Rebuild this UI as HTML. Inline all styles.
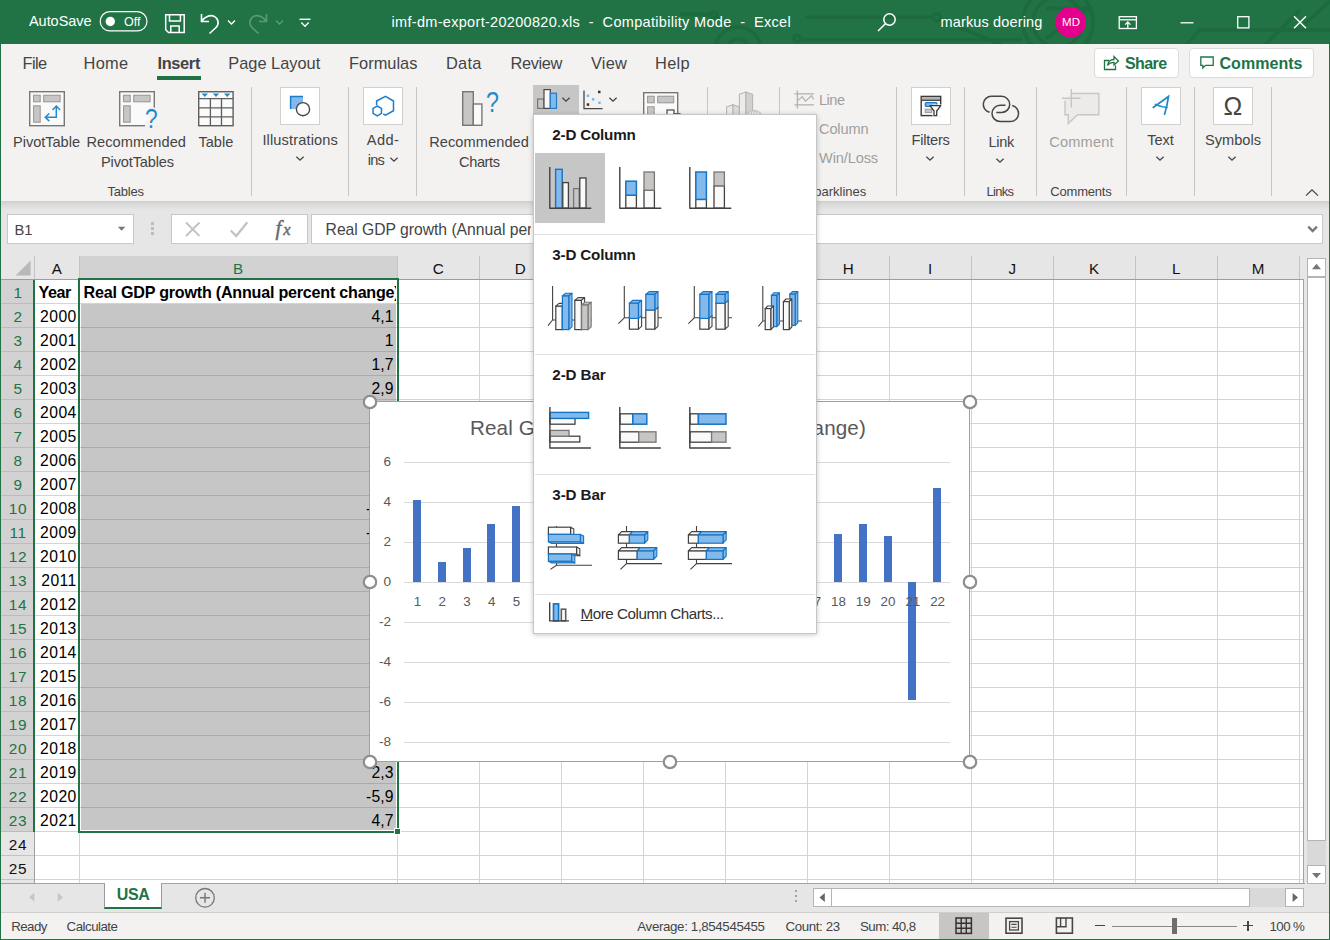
<!DOCTYPE html>
<html lang="en"><head><meta charset="utf-8"><title>Excel</title><style>html,body{margin:0;padding:0}
body{width:1330px;height:940px;overflow:hidden;background:#217346;position:relative;font-family:"Liberation Sans",sans-serif;}
#w{position:absolute;left:0;top:0;width:1330px;height:940px;overflow:hidden;}
#w div,#w svg,#w span.t{position:absolute;}
span.t{white-space:nowrap;}
svg{overflow:visible}
</style></head><body><div id="w">
<div style="left:0px;top:0px;width:1330px;height:44px;background:#217346;"></div>
<svg style="left:680px;top:0px;overflow:hidden;" width="650" height="44" viewBox="680 0 650 44"><g fill="none" stroke="#1d6a3e" stroke-width="3.6">
<path d="M680 14.4 H712 M716 16.5 L732 28"/><circle cx="714" cy="14.8" r="3"/>
<circle cx="738" cy="50" r="23"/><circle cx="738" cy="50" r="11"/>
<circle cx="797" cy="38.6" r="3.2"/><path d="M800.5 39.7 H1022"/>
<path d="M805 17.3 H932"/><circle cx="936.6" cy="17.3" r="3.6"/><path d="M940 19.5 L1002 45"/>
<circle cx="1058" cy="22" r="35"/><circle cx="1058" cy="22" r="25"/>
<path d="M1046 8.4 H1089 L1046 38.5" />
<path d="M1185 46 L1200 30 H1330"/><path d="M1264 46 L1300 10 M1305 24 L1330 1"/>
</g></svg>
<span class="t" style="left:29.00px;top:12.30px;font-size:14.5px;line-height:19px;color:#fff;letter-spacing:-0.048px;">AutoSave</span>
<svg style="left:99px;top:10px;" width="50" height="23" viewBox="0 0 50 23"><rect x="1.2" y="1.7" width="46.8" height="19.2" rx="9.6" fill="none" stroke="#fff" stroke-width="1.2"/><circle cx="11.3" cy="11.5" r="4.7" fill="#fff"/></svg>
<span class="t" style="left:124.00px;top:13.60px;font-size:12.5px;line-height:16px;color:#fff;letter-spacing:0.019px;">Off</span>
<svg style="left:163px;top:12px;" width="24" height="23" viewBox="0 0 24 23"><g fill="none" stroke="#fff" stroke-width="1.5"><path d="M2.7 2.7 H21.2 V20.5 H5.5 L2.7 17.7 Z"/><path d="M6.5 2.7 V9 H17.4 V2.7"/><path d="M7.8 20.5 V14 H16.2 V20.5"/></g></svg>
<svg style="left:197px;top:10px;" width="26" height="26" viewBox="0 0 26 26"><g fill="none" stroke="#fff" stroke-width="1.6"><path d="M4.5 4 V11.5 H12"/><path d="M4.8 11.2 C8 6.5 13.5 4.3 17.6 6.6 C22 9.2 22.3 14.5 18.5 18 L12.5 23.5"/></g></svg>
<svg style="left:226px;top:18px;" width="12" height="9" viewBox="0 0 12 9"><path d="M2 2.5 L5.5 6 L9 2.5" fill="none" stroke="#fff" stroke-width="1.4"/></svg>
<svg style="left:245px;top:10px;" width="26" height="26" viewBox="0 0 26 26"><g fill="none" stroke="#5c9a79" stroke-width="1.6" transform="translate(26,0) scale(-1,1)"><path d="M4.5 4 V11.5 H12"/><path d="M4.8 11.2 C8 6.5 13.5 4.3 17.6 6.6 C22 9.2 22.3 14.5 18.5 18 L12.5 23.5"/></g></svg>
<svg style="left:274px;top:18px;" width="12" height="9" viewBox="0 0 12 9"><path d="M2 2.5 L5.5 6 L9 2.5" fill="none" stroke="#5c9a79" stroke-width="1.4"/></svg>
<svg style="left:297px;top:15px;" width="16" height="14" viewBox="0 0 16 14"><path d="M2.5 4.3 H13.5" stroke="#fff" stroke-width="1.4"/><path d="M4.3 7.6 L8 11.2 L11.7 7.6" fill="none" stroke="#fff" stroke-width="1.4"/></svg>
<span class="t" style="left:391.50px;top:13.00px;font-size:14.5px;line-height:19px;color:#fff;letter-spacing:0.311px;white-space:pre;">imf-dm-export-20200820.xls  -  Compatibility Mode  -  Excel</span>
<svg style="left:874px;top:10px;" width="26" height="24" viewBox="0 0 26 24"><g fill="none" stroke="#fff" stroke-width="1.5"><circle cx="15.5" cy="9.5" r="5.7"/><path d="M11.5 13.6 L4 21"/></g></svg>
<span class="t" style="left:940.50px;top:13.10px;font-size:14.5px;line-height:19px;color:#fff;letter-spacing:0.147px;">markus doering</span>
<svg style="left:1055px;top:6px;" width="32" height="32" viewBox="0 0 32 32"><circle cx="15.7" cy="16.3" r="15.3" fill="#e3008c"/></svg>
<span class="t" style="left:1062.00px;top:14.90px;font-size:11.5px;line-height:15px;color:#fff;letter-spacing:0.057px;">MD</span>
<svg style="left:1116px;top:14px;" width="24" height="18" viewBox="0 0 24 18"><g fill="none" stroke="#fff" stroke-width="1.3"><rect x="3.2" y="2.7" width="17.2" height="11.8"/><path d="M3.2 5.8 H20.4"/><path d="M11.8 14 V8.2 M9.2 10.6 L11.8 8 L14.4 10.6"/></g></svg>
<svg style="left:1176px;top:14px;" width="22" height="18" viewBox="0 0 22 18"><path d="M4.5 8.8 H17.5" stroke="#fff" stroke-width="1.3"/></svg>
<svg style="left:1232px;top:12px;" width="22" height="22" viewBox="0 0 22 22"><rect x="5.7" y="4.7" width="11.2" height="11.2" fill="none" stroke="#fff" stroke-width="1.3"/></svg>
<svg style="left:1289px;top:12px;" width="22" height="22" viewBox="0 0 22 22"><path d="M5 4.3 L17 16.3 M17 4.3 L5 16.3" stroke="#fff" stroke-width="1.4"/></svg>
<div style="left:1px;top:44px;width:1328px;height:157px;background:#f3f2f1;"></div>
<span class="t" style="left:22.50px;top:52.90px;font-size:16.4px;line-height:21px;color:#444;letter-spacing:-0.607px;">File</span>
<span class="t" style="left:83.60px;top:52.90px;font-size:16.4px;line-height:21px;color:#444;letter-spacing:0.238px;">Home</span>
<span class="t" style="left:157.50px;top:52.90px;font-size:16.4px;line-height:21px;color:#444;font-weight:700;letter-spacing:-0.360px;">Insert</span>
<span class="t" style="left:228.30px;top:52.90px;font-size:16.4px;line-height:21px;color:#444;letter-spacing:-0.009px;">Page Layout</span>
<span class="t" style="left:349.00px;top:52.90px;font-size:16.4px;line-height:21px;color:#444;letter-spacing:0.019px;">Formulas</span>
<span class="t" style="left:446.00px;top:52.90px;font-size:16.4px;line-height:21px;color:#444;letter-spacing:0.214px;">Data</span>
<span class="t" style="left:510.50px;top:52.90px;font-size:16.4px;line-height:21px;color:#444;letter-spacing:-0.379px;">Review</span>
<span class="t" style="left:591.00px;top:52.90px;font-size:16.4px;line-height:21px;color:#444;letter-spacing:0.187px;">View</span>
<span class="t" style="left:655.00px;top:52.90px;font-size:16.4px;line-height:21px;color:#444;letter-spacing:0.317px;">Help</span>
<div style="left:157px;top:76px;width:44px;height:4px;background:#217346;"></div>
<div style="left:1094px;top:48px;width:85px;height:30px;background:#fff;border:1px solid #dddbd9;border-radius:4px;box-sizing:border-box;"></div>
<div style="left:1189px;top:48px;width:125px;height:30px;background:#fff;border:1px solid #dddbd9;border-radius:4px;box-sizing:border-box;"></div>
<svg style="left:1101px;top:53px;" width="20" height="20" viewBox="0 0 20 20"><g fill="none" stroke="#217346" stroke-width="1.3"><path d="M8 7.5 H3.5 V16.5 H14.5 V12.5"/><path d="M6.5 12.5 C7 8.5 9.5 6.5 13 6.5 V3.5 L17.5 8 L13 12 V9.3 C10 9.3 8 10.3 6.5 12.5 Z"/></g></svg>
<span class="t" style="left:1125.00px;top:52.80px;font-size:16px;line-height:21px;color:#217346;font-weight:700;letter-spacing:-0.594px;">Share</span>
<svg style="left:1198px;top:54px;" width="20" height="18" viewBox="0 0 20 18"><path d="M2.8 3 H15.2 V11.3 H7.6 L4.8 14 V11.3 H2.8 Z" fill="none" stroke="#217346" stroke-width="1.3"/></svg>
<span class="t" style="left:1219.50px;top:52.80px;font-size:16px;line-height:21px;color:#217346;font-weight:700;letter-spacing:0.040px;">Comments</span>
<div style="left:251.0px;top:87px;width:1px;height:109px;background:#c8c6c4;"></div>
<div style="left:348.0px;top:87px;width:1px;height:109px;background:#c8c6c4;"></div>
<div style="left:416.0px;top:87px;width:1px;height:109px;background:#c8c6c4;"></div>
<div style="left:707px;top:87px;width:1px;height:109px;background:#c8c6c4;"></div>
<div style="left:779px;top:87px;width:1px;height:109px;background:#c8c6c4;"></div>
<div style="left:896px;top:87px;width:1px;height:109px;background:#c8c6c4;"></div>
<div style="left:964.0px;top:87px;width:1px;height:109px;background:#c8c6c4;"></div>
<div style="left:1036.0px;top:87px;width:1px;height:109px;background:#c8c6c4;"></div>
<div style="left:1126.0px;top:87px;width:1px;height:109px;background:#c8c6c4;"></div>
<div style="left:1194.0px;top:87px;width:1px;height:109px;background:#c8c6c4;"></div>
<div style="left:1271.0px;top:87px;width:1px;height:109px;background:#c8c6c4;"></div>
<svg style="left:29px;top:91px;" width="40" height="40" viewBox="0 0 40 40"><rect x="0.7" y="0.7" width="34.6" height="34" fill="#fafafa" stroke="#797775" stroke-width="1.4"/><rect x="4.6" y="4.2" width="6.6" height="6.6" fill="#c8c6c4" stroke="#979593" stroke-width="1"/><rect x="14.7" y="4.2" width="16.4" height="6.6" fill="#c8c6c4" stroke="#979593" stroke-width="1"/><rect x="4.6" y="14.8" width="6.6" height="16.4" fill="#c8c6c4" stroke="#979593" stroke-width="1"/><g fill="none" stroke="#1e8bcd" stroke-width="1.5"><path d="M16.5 26.3 H27.3 V15.5"/><path d="M20.3 22.5 L16.3 26.3 L20.3 30.1"/><path d="M23.5 19 L27.3 15 L31.1 19"/></g></svg>
<span class="t" style="left:13.00px;top:133.00px;font-size:14.6px;line-height:19px;color:#444;letter-spacing:-0.036px;">PivotTable</span>
<svg style="left:119.4px;top:91px;" width="40" height="40" viewBox="0 0 40 40"><rect x="0.7" y="0.7" width="34.6" height="34" fill="#fafafa" stroke="#797775" stroke-width="1.4"/><rect x="4.6" y="4.2" width="6.6" height="6.6" fill="#c8c6c4" stroke="#979593" stroke-width="1"/><rect x="14.7" y="4.2" width="16.4" height="6.6" fill="#c8c6c4" stroke="#979593" stroke-width="1"/><rect x="4.6" y="14.8" width="6.6" height="16.4" fill="#c8c6c4" stroke="#979593" stroke-width="1"/><rect x="30" y="16.6" width="8" height="22" fill="#f3f2f1"/><rect x="26" y="30" width="6" height="8" fill="#f3f2f1"/></svg>
<span class="t" style="left:144.60px;top:99.70px;font-size:28.5px;line-height:37px;color:#1e8bcd;transform:scaleX(0.8);transform-origin:0 50%;">?</span>
<span class="t" style="left:86.50px;top:133.00px;font-size:14.6px;line-height:19px;color:#444;letter-spacing:0.045px;">Recommended</span>
<span class="t" style="left:101.00px;top:152.90px;font-size:14.6px;line-height:19px;color:#444;letter-spacing:-0.151px;">PivotTables</span>
<svg style="left:198.2px;top:91px;" width="40" height="40" viewBox="0 0 40 40"><rect x="0.7" y="0.7" width="34.4" height="34" fill="#fafafa" stroke="#605e5c" stroke-width="1.4"/><path d="M0.7 7.6 H35 M0.7 16.8 H35 M0.7 25.8 H35 M12.4 7.6 V34.7 M23.5 7.6 V34.7" stroke="#605e5c" stroke-width="1.3" fill="none"/><path d="M3.6 2.6 h6.4 l-3.2 3.4z M14.8 2.6 h6.4 l-3.2 3.4z M26 2.6 h6.4 l-3.2 3.4z" fill="#1e8bcd"/></svg>
<span class="t" style="left:198.50px;top:133.00px;font-size:14.6px;line-height:19px;color:#444;letter-spacing:-0.021px;">Table</span>
<span class="t" style="left:107.40px;top:182.80px;font-size:13px;line-height:17px;color:#444;letter-spacing:-0.197px;">Tables</span>
<div style="left:280px;top:87px;width:40px;height:38px;background:#fff;border:1px solid #d2d0ce;box-sizing:border-box;"></div>
<svg style="left:286px;top:92px;" width="30" height="28" viewBox="0 0 30 28"><path d="M4.6 4.4 H17 V17 H4.6 Z" fill="#83b9eb"/><path d="M4.6 17 V4.4 H17" fill="none" stroke="#1e7cc8" stroke-width="1.5"/><circle cx="17" cy="17.2" r="6.6" fill="#fff" stroke="#484644" stroke-width="1.4"/></svg>
<span class="t" style="left:262.40px;top:130.90px;font-size:14.6px;line-height:19px;color:#444;letter-spacing:0.135px;">Illustrations</span>
<svg style="left:293.5px;top:154.0px;" width="12" height="9" viewBox="0 0 12 9"><path d="M2.4 2.7 L6 6.2 L9.6 2.7" fill="none" stroke="#444" stroke-width="1.3"/></svg>
<div style="left:363px;top:87px;width:40px;height:38px;background:#fff;border:1px solid #d2d0ce;box-sizing:border-box;"></div>
<svg style="left:364px;top:92px;" width="38" height="30" viewBox="0 0 38 30"><path d="M12.6 13.2 V9 L21.5 4.3 L29.5 9 V18.7 L21.5 23.2 L19.3 22" fill="none" stroke="#1e7cc8" stroke-width="1.5"/><path d="M13.3 14 L17.5 16.4 V21.4 L13.3 23.8 L9 21.4 V16.4 Z" fill="none" stroke="#1e7cc8" stroke-width="1.5"/></svg>
<span class="t" style="left:366.80px;top:131.40px;font-size:14.6px;line-height:19px;color:#444;letter-spacing:0.440px;">Add-</span>
<span class="t" style="left:367.80px;top:151.00px;font-size:14.6px;line-height:19px;color:#444;letter-spacing:-0.821px;">ins</span>
<svg style="left:387.5px;top:154.5px;" width="12" height="9" viewBox="0 0 12 9"><path d="M2.4 2.7 L6 6.2 L9.6 2.7" fill="none" stroke="#444" stroke-width="1.3"/></svg>
<svg style="left:462px;top:91.3px;" width="24" height="36" viewBox="0 0 24 36"><rect x="0.7" y="0.7" width="10.6" height="33.6" fill="#c8c6c4" stroke="#797775" stroke-width="1.4"/><rect x="11.3" y="13" width="8.6" height="21.3" fill="#fafafa" stroke="#797775" stroke-width="1.4"/></svg>
<span class="t" style="left:486.00px;top:83.10px;font-size:29px;line-height:38px;color:#1e8bcd;transform:scaleX(0.8);transform-origin:0 50%;">?</span>
<span class="t" style="left:429.20px;top:133.10px;font-size:14.6px;line-height:19px;color:#444;letter-spacing:0.072px;">Recommended</span>
<span class="t" style="left:459.00px;top:152.60px;font-size:14.6px;line-height:19px;color:#444;letter-spacing:-0.384px;">Charts</span>
<div style="left:533px;top:85px;width:46px;height:31px;background:#c6c6c6;"></div>
<svg style="left:537px;top:89.3px;" width="22" height="21" viewBox="0 0 22 21"><rect x="0.6" y="10" width="6.4" height="9.4" fill="#c8c6c4" stroke="#797775" stroke-width="1.2"/><rect x="7" y="0.6" width="6.3" height="18.8" fill="#fafafa" stroke="#484644" stroke-width="1.2"/><rect x="13.3" y="4.2" width="6.2" height="15.2" fill="#83b9eb" stroke="#1e7cc8" stroke-width="1.2"/></svg>
<svg style="left:560px;top:94.8px;" width="12" height="9" viewBox="0 0 12 9"><path d="M2.4 2.7 L6 6.2 L9.6 2.7" fill="none" stroke="#444" stroke-width="1.3"/></svg>
<svg style="left:583px;top:89.6px;" width="22" height="21" viewBox="0 0 22 21"><path d="M1 0.5 V18.6 H19.6" fill="none" stroke="#484644" stroke-width="1.3"/><g fill="#7ab8f0"><rect x="3.7" y="4.5" width="2.5" height="2.5"/><rect x="8.9" y="8.1" width="2.5" height="2.5"/><rect x="15.2" y="11.5" width="2.5" height="2.5"/></g><g fill="#333"><rect x="15" y="0.7" width="2.5" height="2.5"/><rect x="3.7" y="13.3" width="2.5" height="2.5"/></g></svg>
<svg style="left:606.5px;top:94.8px;" width="12" height="9" viewBox="0 0 12 9"><path d="M2.4 2.7 L6 6.2 L9.6 2.7" fill="none" stroke="#444" stroke-width="1.3"/></svg>
<svg style="left:643.3px;top:91.5px;" width="40" height="40" viewBox="0 0 40 40"><rect x="0.7" y="0.7" width="34" height="34" fill="#fafafa" stroke="#797775" stroke-width="1.4"/><rect x="4.6" y="4.2" width="6.6" height="6.6" fill="#c8c6c4" stroke="#979593"/><rect x="14.7" y="4.2" width="16" height="6.6" fill="#c8c6c4" stroke="#979593"/><rect x="4.6" y="14.8" width="6.6" height="16.4" fill="#c8c6c4" stroke="#979593"/><rect x="24" y="18" width="7" height="17" fill="#fff" stroke="#484644" stroke-width="1.2"/><rect x="31" y="21.6" width="6" height="14" fill="#83b9eb" stroke="#1e7cc8" stroke-width="1.2"/></svg>
<svg style="left:726px;top:89.5px;" width="42" height="44" viewBox="0 0 42 44"><g stroke="#b8b5b2" stroke-width="1.1"><path d="M0.6 17 L7 14.8 V36 H0.6 Z" fill="#edebe9"/><path d="M7 14.8 L13.4 17 V36 H7 Z" fill="#dddbd9"/><path d="M13.4 4.3 L19.9 2 V36 H13.4 Z" fill="#edebe9"/><path d="M19.9 2 L26.6 4.3 V36 H19.9 Z" fill="#d2d0ce"/></g><circle cx="28.1" cy="29" r="8.6" fill="#f3f2f1" stroke="#c8c6c4" stroke-width="1.3"/><path d="M19.5 29 H36.7 M28.1 20.4 V37.6" stroke="#c8c6c4" stroke-width="1.1"/><ellipse cx="28.1" cy="29" rx="4" ry="8.6" fill="none" stroke="#c8c6c4" stroke-width="1.1"/></svg>
<svg style="left:794px;top:90px;" width="21" height="19" viewBox="0 0 21 19"><path d="M3.4 0.6 V18.4 M0.4 3.8 H20 M0.4 14.8 H20" stroke="#b3b0ad" stroke-width="1.3" fill="none"/><path d="M4 10.4 L8.3 6.6 L11.3 11.2 L17.6 5.8 L19.6 9.4" stroke="#b3b0ad" stroke-width="1.2" fill="none"/></svg>
<span class="t" style="left:819.00px;top:91.40px;font-size:14.6px;line-height:19px;color:#a19f9d;letter-spacing:-0.501px;">Line</span>
<span class="t" style="left:819.00px;top:120.40px;font-size:14.6px;line-height:19px;color:#a19f9d;letter-spacing:-0.152px;">Column</span>
<span class="t" style="left:819.00px;top:149.40px;font-size:14.6px;line-height:19px;color:#a19f9d;letter-spacing:-0.130px;">Win/Loss</span>
<span class="t" style="left:805.50px;top:183.10px;font-size:13px;line-height:17px;color:#444;letter-spacing:0.010px;">Sparklines</span>
<div style="left:911px;top:87px;width:40px;height:38px;background:#fff;border:1px solid #d2d0ce;box-sizing:border-box;"></div>
<svg style="left:918px;top:94px;" width="26" height="24" viewBox="918 94 26 24"><rect x="921.2" y="96.4" width="19.5" height="19.2" fill="#fafafa" stroke="#3b3a39" stroke-width="1.4"/><rect x="921.9" y="97.1" width="18.1" height="2.9" fill="#b3b0ad"/><path d="M921.2 100.3 H940.7" stroke="#3b3a39" stroke-width="1.2"/><rect x="925.4" y="102.6" width="11.4" height="3.8" rx="1" fill="#83b9eb" stroke="#1e7cc8" stroke-width="1.4"/><rect x="925.2" y="109.2" width="6.6" height="3.4" fill="#c8c6c4" stroke="#979593" stroke-width="0.9"/><rect x="932.5" y="104.5" width="9.5" height="12.2" fill="#fff"/><path d="M930 105.6 H940.8 L936.7 111 V115.6 H934 V111 Z" fill="#fff" stroke="#3b3a39" stroke-width="1.3" stroke-linejoin="round"/></svg>
<span class="t" style="left:911.60px;top:131.00px;font-size:14.6px;line-height:19px;color:#444;letter-spacing:-0.249px;">Filters</span>
<svg style="left:924.3px;top:154.0px;" width="12" height="9" viewBox="0 0 12 9"><path d="M2.4 2.7 L6 6.2 L9.6 2.7" fill="none" stroke="#444" stroke-width="1.3"/></svg>
<svg style="left:980px;top:94px;" width="42" height="30" viewBox="980 94 42 30"><g fill="none" stroke="#484644" stroke-width="1.5"><path d="M996.3 112.5 H1001.6 A8.1 8.1 0 0 0 1001.6 96.3 H991.4 A8.1 8.1 0 0 0 989.6 112.3"/><path d="M1005.5 105.3 H1000.1 A8.1 8.1 0 0 0 1000.1 121.5 H1010.4 A8.1 8.1 0 0 0 1012.2 105.5"/></g></svg>
<span class="t" style="left:988.40px;top:133.10px;font-size:14.6px;line-height:19px;color:#444;letter-spacing:-0.296px;">Link</span>
<svg style="left:994.3px;top:155.8px;" width="12" height="9" viewBox="0 0 12 9"><path d="M2.4 2.7 L6 6.2 L9.6 2.7" fill="none" stroke="#444" stroke-width="1.3"/></svg>
<span class="t" style="left:986.40px;top:183.10px;font-size:13px;line-height:17px;color:#444;letter-spacing:-0.670px;">Links</span>
<svg style="left:1061.3px;top:89px;" width="40" height="36" viewBox="0 0 40 36"><path d="M11 4.5 H37.8 V25.8 H16.5 L7.3 34.5 V25.8 H4 V11.5" fill="#edebe9" stroke="#c8c6c4" stroke-width="1.4"/><path d="M10.3 0 V18.5 M1 9.3 H19.5" stroke="#c8c6c4" stroke-width="1.4"/></svg>
<span class="t" style="left:1049.30px;top:133.10px;font-size:14.6px;line-height:19px;color:#a19f9d;letter-spacing:0.159px;">Comment</span>
<span class="t" style="left:1050.30px;top:183.10px;font-size:13px;line-height:17px;color:#444;letter-spacing:-0.194px;">Comments</span>
<div style="left:1141px;top:87px;width:40px;height:38px;background:#fff;border:1px solid #d2d0ce;box-sizing:border-box;"></div>
<svg style="left:1151.4px;top:95px;" width="20" height="22" viewBox="0 0 20 22"><g fill="none" stroke="#1e8bcd" stroke-width="1.7" stroke-linecap="round"><path d="M2.2 12.5 L17.5 1.5 C16.8 6 15.5 13 13.6 19.3"/><path d="M4.5 9.5 C9 11.5 12.5 12.3 16 12.5"/></g></svg>
<span class="t" style="left:1147.30px;top:130.90px;font-size:14.6px;line-height:19px;color:#444;letter-spacing:-0.094px;">Text</span>
<svg style="left:1154.4px;top:153.8px;" width="12" height="9" viewBox="0 0 12 9"><path d="M2.4 2.7 L6 6.2 L9.6 2.7" fill="none" stroke="#444" stroke-width="1.3"/></svg>
<div style="left:1213px;top:87px;width:40px;height:38px;background:#fff;border:1px solid #d2d0ce;box-sizing:border-box;"></div>
<span class="t" style="left:1132.90px;width:200px;text-align:center;top:89.60px;font-size:25px;line-height:32px;color:#484644;">Ω</span>
<span class="t" style="left:1205.00px;top:130.90px;font-size:14.6px;line-height:19px;color:#444;">Symbols</span>
<svg style="left:1226.3px;top:153.8px;" width="12" height="9" viewBox="0 0 12 9"><path d="M2.4 2.7 L6 6.2 L9.6 2.7" fill="none" stroke="#444" stroke-width="1.3"/></svg>
<svg style="left:1304px;top:187px;" width="16" height="11" viewBox="0 0 16 11"><path d="M2 8.6 L8 2.8 L14 8.6" fill="none" stroke="#444" stroke-width="1.3"/></svg>
<div style="left:1px;top:201px;width:1328px;height:79px;background:#e6e6e6;"></div>
<div style="left:1px;top:201px;width:1328px;height:9px;background:linear-gradient(#cfcfcf,#dadada 35%,#e6e6e6);"></div>
<div style="left:7px;top:214px;width:127px;height:30px;background:#fff;border:1px solid #c8c8c8;box-sizing:border-box;"></div>
<span class="t" style="left:14.50px;top:220.50px;font-size:14.8px;line-height:19px;color:#444;letter-spacing:-0.152px;">B1</span>
<svg style="left:116px;top:225px;" width="12" height="8" viewBox="0 0 12 8"><path d="M1.8 1.8 H9.4 L5.6 5.8 Z" fill="#777"/></svg>
<div style="left:151px;top:221.5px;width:3px;height:3px;background:#bdbdbd;"></div>
<div style="left:151px;top:227px;width:3px;height:3px;background:#bdbdbd;"></div>
<div style="left:151px;top:232.2px;width:3px;height:3px;background:#bdbdbd;"></div>
<div style="left:171px;top:214px;width:137px;height:30px;background:#fff;border:1px solid #c8c8c8;box-sizing:border-box;"></div>
<svg style="left:183px;top:220px;" width="20" height="18" viewBox="0 0 20 18"><path d="M3 2.5 L16.5 16 M16.5 2.5 L3 16" stroke="#c2c2c2" stroke-width="1.8" fill="none"/></svg>
<svg style="left:228px;top:219px;" width="22" height="20" viewBox="0 0 22 20"><path d="M2.8 11.5 L8.2 17 L19.3 3.2" stroke="#c2c2c2" stroke-width="2.2" fill="none"/></svg>
<span class="t" style="left:275.60px;top:214.50px;font-size:21px;line-height:27px;color:#6a6a6a;font-style:italic;-webkit-text-stroke:0.45px #6a6a6a;font-family:'Liberation Serif','DejaVu Serif',serif;">f</span>
<span class="t" style="left:283.20px;top:219.10px;font-size:16.5px;line-height:21px;color:#6a6a6a;font-style:italic;-webkit-text-stroke:0.45px #6a6a6a;font-family:'Liberation Serif','DejaVu Serif',serif;">x</span>
<div style="left:311px;top:214px;width:1012px;height:30px;background:#fff;border:1px solid #c8c8c8;box-sizing:border-box;"></div>
<div style="left:312px;top:215px;width:219px;height:28px;overflow:hidden;"><span class="t" style="left:13.60px;top:5.30px;font-size:15.7px;line-height:20px;color:#444;letter-spacing:-0.020px;">Real GDP growth (Annual percent change)</span></div>
<svg style="left:1306px;top:223px;" width="14" height="12" viewBox="0 0 14 12"><path d="M2.3 3.6 L6.6 8 L10.9 3.6" fill="none" stroke="#777" stroke-width="2.3"/></svg>
<div style="left:1px;top:256px;width:1303px;height:24px;background:#e6e6e6;"></div>
<div style="left:80px;top:256px;width:317px;height:23px;background:#d2d2d2;"></div>
<span class="t" style="left:-43.30px;width:200px;text-align:center;top:259.30px;font-size:15.2px;line-height:20px;color:#111;">A</span>
<div style="left:79px;top:256px;width:1px;height:23px;background:#c3c3c3;"></div>
<span class="t" style="left:138.20px;width:200px;text-align:center;top:259.30px;font-size:15.2px;line-height:20px;color:#217346;">B</span>
<div style="left:397px;top:256px;width:1px;height:23px;background:#c3c3c3;"></div>
<span class="t" style="left:338.20px;width:200px;text-align:center;top:259.30px;font-size:15.2px;line-height:20px;color:#111;">C</span>
<div style="left:479px;top:256px;width:1px;height:23px;background:#c3c3c3;"></div>
<span class="t" style="left:420.20px;width:200px;text-align:center;top:259.30px;font-size:15.2px;line-height:20px;color:#111;">D</span>
<div style="left:561px;top:256px;width:1px;height:23px;background:#c3c3c3;"></div>
<span class="t" style="left:502.20px;width:200px;text-align:center;top:259.30px;font-size:15.2px;line-height:20px;color:#111;">E</span>
<div style="left:643px;top:256px;width:1px;height:23px;background:#c3c3c3;"></div>
<span class="t" style="left:584.20px;width:200px;text-align:center;top:259.30px;font-size:15.2px;line-height:20px;color:#111;">F</span>
<div style="left:725px;top:256px;width:1px;height:23px;background:#c3c3c3;"></div>
<span class="t" style="left:666.20px;width:200px;text-align:center;top:259.30px;font-size:15.2px;line-height:20px;color:#111;">G</span>
<div style="left:807px;top:256px;width:1px;height:23px;background:#c3c3c3;"></div>
<span class="t" style="left:748.20px;width:200px;text-align:center;top:259.30px;font-size:15.2px;line-height:20px;color:#111;">H</span>
<div style="left:889px;top:256px;width:1px;height:23px;background:#c3c3c3;"></div>
<span class="t" style="left:830.20px;width:200px;text-align:center;top:259.30px;font-size:15.2px;line-height:20px;color:#111;">I</span>
<div style="left:971px;top:256px;width:1px;height:23px;background:#c3c3c3;"></div>
<span class="t" style="left:912.20px;width:200px;text-align:center;top:259.30px;font-size:15.2px;line-height:20px;color:#111;">J</span>
<div style="left:1053px;top:256px;width:1px;height:23px;background:#c3c3c3;"></div>
<span class="t" style="left:994.20px;width:200px;text-align:center;top:259.30px;font-size:15.2px;line-height:20px;color:#111;">K</span>
<div style="left:1135px;top:256px;width:1px;height:23px;background:#c3c3c3;"></div>
<span class="t" style="left:1076.20px;width:200px;text-align:center;top:259.30px;font-size:15.2px;line-height:20px;color:#111;">L</span>
<div style="left:1217px;top:256px;width:1px;height:23px;background:#c3c3c3;"></div>
<span class="t" style="left:1158.20px;width:200px;text-align:center;top:259.30px;font-size:15.2px;line-height:20px;color:#111;">M</span>
<div style="left:1299px;top:256px;width:1px;height:23px;background:#c3c3c3;"></div>
<div style="left:34px;top:256px;width:1px;height:23px;background:#c3c3c3;"></div>
<div style="left:1px;top:279px;width:1303px;height:1px;background:#9e9e9e;"></div>
<svg style="left:14px;top:259px;" width="18" height="18" viewBox="0 0 18 18"><path d="M16.6 1.6 V16.6 H1.6 Z" fill="#b9b9b9"/></svg>
<div style="left:35px;top:280px;width:1268px;height:603px;background:#fff;"></div>
<div style="left:1px;top:280px;width:33px;height:603px;background:#e6e6e6;"></div>
<div style="left:1px;top:280px;width:33px;height:552px;background:#d2d2d2;"></div>
<div style="left:34px;top:832px;width:1px;height:51px;background:#9e9e9e;"></div>
<div style="left:81px;top:304px;width:315px;height:526px;background:#c6c6c6;"></div>
<div style="left:79px;top:280px;width:1px;height:603px;background:#d4d4d4;"></div>
<div style="left:397px;top:280px;width:1px;height:603px;background:#d4d4d4;"></div>
<div style="left:479px;top:280px;width:1px;height:603px;background:#d4d4d4;"></div>
<div style="left:561px;top:280px;width:1px;height:603px;background:#d4d4d4;"></div>
<div style="left:643px;top:280px;width:1px;height:603px;background:#d4d4d4;"></div>
<div style="left:725px;top:280px;width:1px;height:603px;background:#d4d4d4;"></div>
<div style="left:807px;top:280px;width:1px;height:603px;background:#d4d4d4;"></div>
<div style="left:889px;top:280px;width:1px;height:603px;background:#d4d4d4;"></div>
<div style="left:971px;top:280px;width:1px;height:603px;background:#d4d4d4;"></div>
<div style="left:1053px;top:280px;width:1px;height:603px;background:#d4d4d4;"></div>
<div style="left:1135px;top:280px;width:1px;height:603px;background:#d4d4d4;"></div>
<div style="left:1217px;top:280px;width:1px;height:603px;background:#d4d4d4;"></div>
<div style="left:1299px;top:280px;width:1px;height:603px;background:#d4d4d4;"></div>
<div style="left:1303px;top:279px;width:1px;height:605px;background:#a3a3a3;"></div>
<div style="left:35px;top:303px;width:1268px;height:1px;background:#d4d4d4;"></div>
<div style="left:1px;top:303px;width:33px;height:1px;background:#bcbcbc;"></div>
<span class="t" style="left:-82.30px;width:200px;text-align:center;top:282.50px;font-size:15.4px;line-height:20px;color:#217346;letter-spacing:0.6px;text-indent:0.6px;">1</span>
<div style="left:35px;top:327px;width:1268px;height:1px;background:#d4d4d4;"></div>
<div style="left:1px;top:327px;width:33px;height:1px;background:#bcbcbc;"></div>
<div style="left:81px;top:327px;width:315px;height:1px;background:#ababab;"></div>
<span class="t" style="left:-82.30px;width:200px;text-align:center;top:306.50px;font-size:15.4px;line-height:20px;color:#217346;letter-spacing:0.6px;text-indent:0.6px;">2</span>
<div style="left:35px;top:351px;width:1268px;height:1px;background:#d4d4d4;"></div>
<div style="left:1px;top:351px;width:33px;height:1px;background:#bcbcbc;"></div>
<div style="left:81px;top:351px;width:315px;height:1px;background:#ababab;"></div>
<span class="t" style="left:-82.30px;width:200px;text-align:center;top:330.50px;font-size:15.4px;line-height:20px;color:#217346;letter-spacing:0.6px;text-indent:0.6px;">3</span>
<div style="left:35px;top:375px;width:1268px;height:1px;background:#d4d4d4;"></div>
<div style="left:1px;top:375px;width:33px;height:1px;background:#bcbcbc;"></div>
<div style="left:81px;top:375px;width:315px;height:1px;background:#ababab;"></div>
<span class="t" style="left:-82.30px;width:200px;text-align:center;top:354.50px;font-size:15.4px;line-height:20px;color:#217346;letter-spacing:0.6px;text-indent:0.6px;">4</span>
<div style="left:35px;top:399px;width:1268px;height:1px;background:#d4d4d4;"></div>
<div style="left:1px;top:399px;width:33px;height:1px;background:#bcbcbc;"></div>
<div style="left:81px;top:399px;width:315px;height:1px;background:#ababab;"></div>
<span class="t" style="left:-82.30px;width:200px;text-align:center;top:378.50px;font-size:15.4px;line-height:20px;color:#217346;letter-spacing:0.6px;text-indent:0.6px;">5</span>
<div style="left:35px;top:423px;width:1268px;height:1px;background:#d4d4d4;"></div>
<div style="left:1px;top:423px;width:33px;height:1px;background:#bcbcbc;"></div>
<div style="left:81px;top:423px;width:315px;height:1px;background:#ababab;"></div>
<span class="t" style="left:-82.30px;width:200px;text-align:center;top:402.50px;font-size:15.4px;line-height:20px;color:#217346;letter-spacing:0.6px;text-indent:0.6px;">6</span>
<div style="left:35px;top:447px;width:1268px;height:1px;background:#d4d4d4;"></div>
<div style="left:1px;top:447px;width:33px;height:1px;background:#bcbcbc;"></div>
<div style="left:81px;top:447px;width:315px;height:1px;background:#ababab;"></div>
<span class="t" style="left:-82.30px;width:200px;text-align:center;top:426.50px;font-size:15.4px;line-height:20px;color:#217346;letter-spacing:0.6px;text-indent:0.6px;">7</span>
<div style="left:35px;top:471px;width:1268px;height:1px;background:#d4d4d4;"></div>
<div style="left:1px;top:471px;width:33px;height:1px;background:#bcbcbc;"></div>
<div style="left:81px;top:471px;width:315px;height:1px;background:#ababab;"></div>
<span class="t" style="left:-82.30px;width:200px;text-align:center;top:450.50px;font-size:15.4px;line-height:20px;color:#217346;letter-spacing:0.6px;text-indent:0.6px;">8</span>
<div style="left:35px;top:495px;width:1268px;height:1px;background:#d4d4d4;"></div>
<div style="left:1px;top:495px;width:33px;height:1px;background:#bcbcbc;"></div>
<div style="left:81px;top:495px;width:315px;height:1px;background:#ababab;"></div>
<span class="t" style="left:-82.30px;width:200px;text-align:center;top:474.50px;font-size:15.4px;line-height:20px;color:#217346;letter-spacing:0.6px;text-indent:0.6px;">9</span>
<div style="left:35px;top:519px;width:1268px;height:1px;background:#d4d4d4;"></div>
<div style="left:1px;top:519px;width:33px;height:1px;background:#bcbcbc;"></div>
<div style="left:81px;top:519px;width:315px;height:1px;background:#ababab;"></div>
<span class="t" style="left:-82.30px;width:200px;text-align:center;top:498.50px;font-size:15.4px;line-height:20px;color:#217346;letter-spacing:0.6px;text-indent:0.6px;">10</span>
<div style="left:35px;top:543px;width:1268px;height:1px;background:#d4d4d4;"></div>
<div style="left:1px;top:543px;width:33px;height:1px;background:#bcbcbc;"></div>
<div style="left:81px;top:543px;width:315px;height:1px;background:#ababab;"></div>
<span class="t" style="left:-82.30px;width:200px;text-align:center;top:522.50px;font-size:15.4px;line-height:20px;color:#217346;letter-spacing:0.6px;text-indent:0.6px;">11</span>
<div style="left:35px;top:567px;width:1268px;height:1px;background:#d4d4d4;"></div>
<div style="left:1px;top:567px;width:33px;height:1px;background:#bcbcbc;"></div>
<div style="left:81px;top:567px;width:315px;height:1px;background:#ababab;"></div>
<span class="t" style="left:-82.30px;width:200px;text-align:center;top:546.50px;font-size:15.4px;line-height:20px;color:#217346;letter-spacing:0.6px;text-indent:0.6px;">12</span>
<div style="left:35px;top:591px;width:1268px;height:1px;background:#d4d4d4;"></div>
<div style="left:1px;top:591px;width:33px;height:1px;background:#bcbcbc;"></div>
<div style="left:81px;top:591px;width:315px;height:1px;background:#ababab;"></div>
<span class="t" style="left:-82.30px;width:200px;text-align:center;top:570.50px;font-size:15.4px;line-height:20px;color:#217346;letter-spacing:0.6px;text-indent:0.6px;">13</span>
<div style="left:35px;top:615px;width:1268px;height:1px;background:#d4d4d4;"></div>
<div style="left:1px;top:615px;width:33px;height:1px;background:#bcbcbc;"></div>
<div style="left:81px;top:615px;width:315px;height:1px;background:#ababab;"></div>
<span class="t" style="left:-82.30px;width:200px;text-align:center;top:594.50px;font-size:15.4px;line-height:20px;color:#217346;letter-spacing:0.6px;text-indent:0.6px;">14</span>
<div style="left:35px;top:639px;width:1268px;height:1px;background:#d4d4d4;"></div>
<div style="left:1px;top:639px;width:33px;height:1px;background:#bcbcbc;"></div>
<div style="left:81px;top:639px;width:315px;height:1px;background:#ababab;"></div>
<span class="t" style="left:-82.30px;width:200px;text-align:center;top:618.50px;font-size:15.4px;line-height:20px;color:#217346;letter-spacing:0.6px;text-indent:0.6px;">15</span>
<div style="left:35px;top:663px;width:1268px;height:1px;background:#d4d4d4;"></div>
<div style="left:1px;top:663px;width:33px;height:1px;background:#bcbcbc;"></div>
<div style="left:81px;top:663px;width:315px;height:1px;background:#ababab;"></div>
<span class="t" style="left:-82.30px;width:200px;text-align:center;top:642.50px;font-size:15.4px;line-height:20px;color:#217346;letter-spacing:0.6px;text-indent:0.6px;">16</span>
<div style="left:35px;top:687px;width:1268px;height:1px;background:#d4d4d4;"></div>
<div style="left:1px;top:687px;width:33px;height:1px;background:#bcbcbc;"></div>
<div style="left:81px;top:687px;width:315px;height:1px;background:#ababab;"></div>
<span class="t" style="left:-82.30px;width:200px;text-align:center;top:666.50px;font-size:15.4px;line-height:20px;color:#217346;letter-spacing:0.6px;text-indent:0.6px;">17</span>
<div style="left:35px;top:711px;width:1268px;height:1px;background:#d4d4d4;"></div>
<div style="left:1px;top:711px;width:33px;height:1px;background:#bcbcbc;"></div>
<div style="left:81px;top:711px;width:315px;height:1px;background:#ababab;"></div>
<span class="t" style="left:-82.30px;width:200px;text-align:center;top:690.50px;font-size:15.4px;line-height:20px;color:#217346;letter-spacing:0.6px;text-indent:0.6px;">18</span>
<div style="left:35px;top:735px;width:1268px;height:1px;background:#d4d4d4;"></div>
<div style="left:1px;top:735px;width:33px;height:1px;background:#bcbcbc;"></div>
<div style="left:81px;top:735px;width:315px;height:1px;background:#ababab;"></div>
<span class="t" style="left:-82.30px;width:200px;text-align:center;top:714.50px;font-size:15.4px;line-height:20px;color:#217346;letter-spacing:0.6px;text-indent:0.6px;">19</span>
<div style="left:35px;top:759px;width:1268px;height:1px;background:#d4d4d4;"></div>
<div style="left:1px;top:759px;width:33px;height:1px;background:#bcbcbc;"></div>
<div style="left:81px;top:759px;width:315px;height:1px;background:#ababab;"></div>
<span class="t" style="left:-82.30px;width:200px;text-align:center;top:738.50px;font-size:15.4px;line-height:20px;color:#217346;letter-spacing:0.6px;text-indent:0.6px;">20</span>
<div style="left:35px;top:783px;width:1268px;height:1px;background:#d4d4d4;"></div>
<div style="left:1px;top:783px;width:33px;height:1px;background:#bcbcbc;"></div>
<div style="left:81px;top:783px;width:315px;height:1px;background:#ababab;"></div>
<span class="t" style="left:-82.30px;width:200px;text-align:center;top:762.50px;font-size:15.4px;line-height:20px;color:#217346;letter-spacing:0.6px;text-indent:0.6px;">21</span>
<div style="left:35px;top:807px;width:1268px;height:1px;background:#d4d4d4;"></div>
<div style="left:1px;top:807px;width:33px;height:1px;background:#bcbcbc;"></div>
<div style="left:81px;top:807px;width:315px;height:1px;background:#ababab;"></div>
<span class="t" style="left:-82.30px;width:200px;text-align:center;top:786.50px;font-size:15.4px;line-height:20px;color:#217346;letter-spacing:0.6px;text-indent:0.6px;">22</span>
<div style="left:35px;top:831px;width:1268px;height:1px;background:#d4d4d4;"></div>
<div style="left:1px;top:831px;width:33px;height:1px;background:#bcbcbc;"></div>
<span class="t" style="left:-82.30px;width:200px;text-align:center;top:810.50px;font-size:15.4px;line-height:20px;color:#217346;letter-spacing:0.6px;text-indent:0.6px;">23</span>
<div style="left:35px;top:855px;width:1268px;height:1px;background:#d4d4d4;"></div>
<div style="left:1px;top:855px;width:33px;height:1px;background:#c3c3c3;"></div>
<span class="t" style="left:-82.30px;width:200px;text-align:center;top:834.50px;font-size:15.4px;line-height:20px;color:#111;letter-spacing:0.6px;text-indent:0.6px;">24</span>
<div style="left:35px;top:879px;width:1268px;height:1px;background:#d4d4d4;"></div>
<div style="left:1px;top:879px;width:33px;height:1px;background:#c3c3c3;"></div>
<span class="t" style="left:-82.30px;width:200px;text-align:center;top:858.50px;font-size:15.4px;line-height:20px;color:#111;letter-spacing:0.6px;text-indent:0.6px;">25</span>
<div style="left:33px;top:280px;width:2px;height:552px;background:#217346;"></div>
<span class="t" style="left:38.40px;top:282.10px;font-size:16.1px;line-height:21px;color:#000;font-weight:700;letter-spacing:-0.356px;">Year</span>
<div style="left:80px;top:280px;width:316px;height:23px;overflow:hidden;"><span class="t" style="left:3.60px;top:2.10px;font-size:16.1px;line-height:21px;color:#000;font-weight:700;letter-spacing:-0.216px;white-space:nowrap;">Real GDP growth (Annual percent change)</span></div>
<span class="t" style="right:1253.70px;top:306.90px;font-size:15.7px;line-height:20px;color:#000;letter-spacing:0.45px;margin-right:-0.45px;">2000</span>
<span class="t" style="right:936.40px;top:306.90px;font-size:15.7px;line-height:20px;color:#000;letter-spacing:0.2px;margin-right:-0.2px;">4,1</span>
<span class="t" style="right:1253.70px;top:330.90px;font-size:15.7px;line-height:20px;color:#000;letter-spacing:0.45px;margin-right:-0.45px;">2001</span>
<span class="t" style="right:936.40px;top:330.90px;font-size:15.7px;line-height:20px;color:#000;letter-spacing:0.2px;margin-right:-0.2px;">1</span>
<span class="t" style="right:1253.70px;top:354.90px;font-size:15.7px;line-height:20px;color:#000;letter-spacing:0.45px;margin-right:-0.45px;">2002</span>
<span class="t" style="right:936.40px;top:354.90px;font-size:15.7px;line-height:20px;color:#000;letter-spacing:0.2px;margin-right:-0.2px;">1,7</span>
<span class="t" style="right:1253.70px;top:378.90px;font-size:15.7px;line-height:20px;color:#000;letter-spacing:0.45px;margin-right:-0.45px;">2003</span>
<span class="t" style="right:936.40px;top:378.90px;font-size:15.7px;line-height:20px;color:#000;letter-spacing:0.2px;margin-right:-0.2px;">2,9</span>
<span class="t" style="right:1253.70px;top:402.90px;font-size:15.7px;line-height:20px;color:#000;letter-spacing:0.45px;margin-right:-0.45px;">2004</span>
<span class="t" style="right:936.40px;top:402.90px;font-size:15.7px;line-height:20px;color:#000;letter-spacing:0.2px;margin-right:-0.2px;">3,8</span>
<span class="t" style="right:1253.70px;top:426.90px;font-size:15.7px;line-height:20px;color:#000;letter-spacing:0.45px;margin-right:-0.45px;">2005</span>
<span class="t" style="right:936.40px;top:426.90px;font-size:15.7px;line-height:20px;color:#000;letter-spacing:0.2px;margin-right:-0.2px;">3,5</span>
<span class="t" style="right:1253.70px;top:450.90px;font-size:15.7px;line-height:20px;color:#000;letter-spacing:0.45px;margin-right:-0.45px;">2006</span>
<span class="t" style="right:936.40px;top:450.90px;font-size:15.7px;line-height:20px;color:#000;letter-spacing:0.2px;margin-right:-0.2px;">2,9</span>
<span class="t" style="right:1253.70px;top:474.90px;font-size:15.7px;line-height:20px;color:#000;letter-spacing:0.45px;margin-right:-0.45px;">2007</span>
<span class="t" style="right:936.40px;top:474.90px;font-size:15.7px;line-height:20px;color:#000;letter-spacing:0.2px;margin-right:-0.2px;">1,9</span>
<span class="t" style="right:1253.70px;top:498.90px;font-size:15.7px;line-height:20px;color:#000;letter-spacing:0.45px;margin-right:-0.45px;">2008</span>
<span class="t" style="right:936.40px;top:498.90px;font-size:15.7px;line-height:20px;color:#000;letter-spacing:0.2px;margin-right:-0.2px;">-0,1</span>
<span class="t" style="right:1253.70px;top:522.90px;font-size:15.7px;line-height:20px;color:#000;letter-spacing:0.45px;margin-right:-0.45px;">2009</span>
<span class="t" style="right:936.40px;top:522.90px;font-size:15.7px;line-height:20px;color:#000;letter-spacing:0.2px;margin-right:-0.2px;">-2,5</span>
<span class="t" style="right:1253.70px;top:546.90px;font-size:15.7px;line-height:20px;color:#000;letter-spacing:0.45px;margin-right:-0.45px;">2010</span>
<span class="t" style="right:936.40px;top:546.90px;font-size:15.7px;line-height:20px;color:#000;letter-spacing:0.2px;margin-right:-0.2px;">2,6</span>
<span class="t" style="right:1253.70px;top:570.90px;font-size:15.7px;line-height:20px;color:#000;letter-spacing:0.45px;margin-right:-0.45px;">2011</span>
<span class="t" style="right:936.40px;top:570.90px;font-size:15.7px;line-height:20px;color:#000;letter-spacing:0.2px;margin-right:-0.2px;">1,6</span>
<span class="t" style="right:1253.70px;top:594.90px;font-size:15.7px;line-height:20px;color:#000;letter-spacing:0.45px;margin-right:-0.45px;">2012</span>
<span class="t" style="right:936.40px;top:594.90px;font-size:15.7px;line-height:20px;color:#000;letter-spacing:0.2px;margin-right:-0.2px;">2,2</span>
<span class="t" style="right:1253.70px;top:618.90px;font-size:15.7px;line-height:20px;color:#000;letter-spacing:0.45px;margin-right:-0.45px;">2013</span>
<span class="t" style="right:936.40px;top:618.90px;font-size:15.7px;line-height:20px;color:#000;letter-spacing:0.2px;margin-right:-0.2px;">1,8</span>
<span class="t" style="right:1253.70px;top:642.90px;font-size:15.7px;line-height:20px;color:#000;letter-spacing:0.45px;margin-right:-0.45px;">2014</span>
<span class="t" style="right:936.40px;top:642.90px;font-size:15.7px;line-height:20px;color:#000;letter-spacing:0.2px;margin-right:-0.2px;">2,5</span>
<span class="t" style="right:1253.70px;top:666.90px;font-size:15.7px;line-height:20px;color:#000;letter-spacing:0.45px;margin-right:-0.45px;">2015</span>
<span class="t" style="right:936.40px;top:666.90px;font-size:15.7px;line-height:20px;color:#000;letter-spacing:0.2px;margin-right:-0.2px;">2,9</span>
<span class="t" style="right:1253.70px;top:690.90px;font-size:15.7px;line-height:20px;color:#000;letter-spacing:0.45px;margin-right:-0.45px;">2016</span>
<span class="t" style="right:936.40px;top:690.90px;font-size:15.7px;line-height:20px;color:#000;letter-spacing:0.2px;margin-right:-0.2px;">1,6</span>
<span class="t" style="right:1253.70px;top:714.90px;font-size:15.7px;line-height:20px;color:#000;letter-spacing:0.45px;margin-right:-0.45px;">2017</span>
<span class="t" style="right:936.40px;top:714.90px;font-size:15.7px;line-height:20px;color:#000;letter-spacing:0.2px;margin-right:-0.2px;">2,4</span>
<span class="t" style="right:1253.70px;top:738.90px;font-size:15.7px;line-height:20px;color:#000;letter-spacing:0.45px;margin-right:-0.45px;">2018</span>
<span class="t" style="right:936.40px;top:738.90px;font-size:15.7px;line-height:20px;color:#000;letter-spacing:0.2px;margin-right:-0.2px;">2,9</span>
<span class="t" style="right:1253.70px;top:762.90px;font-size:15.7px;line-height:20px;color:#000;letter-spacing:0.45px;margin-right:-0.45px;">2019</span>
<span class="t" style="right:936.40px;top:762.90px;font-size:15.7px;line-height:20px;color:#000;letter-spacing:0.2px;margin-right:-0.2px;">2,3</span>
<span class="t" style="right:1253.70px;top:786.90px;font-size:15.7px;line-height:20px;color:#000;letter-spacing:0.45px;margin-right:-0.45px;">2020</span>
<span class="t" style="right:936.40px;top:786.90px;font-size:15.7px;line-height:20px;color:#000;letter-spacing:0.2px;margin-right:-0.2px;">-5,9</span>
<span class="t" style="right:1253.70px;top:810.90px;font-size:15.7px;line-height:20px;color:#000;letter-spacing:0.45px;margin-right:-0.45px;">2021</span>
<span class="t" style="right:936.40px;top:810.90px;font-size:15.7px;line-height:20px;color:#000;letter-spacing:0.2px;margin-right:-0.2px;">4,7</span>
<div style="left:78px;top:278px;width:321px;height:555px;border:2px solid #217346;box-sizing:border-box;"></div>
<div style="left:394px;top:828px;width:7px;height:7px;background:#217346;border:1px solid #fff;box-sizing:border-box;"></div>
<div style="left:369px;top:401px;width:601px;height:361px;background:#fff;border:1px solid #a0a0a0;box-sizing:border-box;"></div>
<span class="t" style="left:470.00px;top:414.20px;font-size:20.6px;line-height:27px;color:#595959;letter-spacing:0.122px;">Real GDP growth (Annual percent change)</span>
<div style="left:404.4px;top:461.5px;width:545.6px;height:1px;background:#d9d9d9;"></div>
<span class="t" style="right:939.00px;top:452.50px;font-size:13.6px;line-height:18px;color:#595959;">6</span>
<div style="left:404.4px;top:501.5px;width:545.6px;height:1px;background:#d9d9d9;"></div>
<span class="t" style="right:939.00px;top:492.50px;font-size:13.6px;line-height:18px;color:#595959;">4</span>
<div style="left:404.4px;top:541.5px;width:545.6px;height:1px;background:#d9d9d9;"></div>
<span class="t" style="right:939.00px;top:532.50px;font-size:13.6px;line-height:18px;color:#595959;">2</span>
<div style="left:404.4px;top:581.5px;width:545.6px;height:1px;background:#d9d9d9;"></div>
<span class="t" style="right:939.00px;top:572.50px;font-size:13.6px;line-height:18px;color:#595959;">0</span>
<div style="left:404.4px;top:621.5px;width:545.6px;height:1px;background:#d9d9d9;"></div>
<span class="t" style="right:939.00px;top:612.50px;font-size:13.6px;line-height:18px;color:#595959;">-2</span>
<div style="left:404.4px;top:661.5px;width:545.6px;height:1px;background:#d9d9d9;"></div>
<span class="t" style="right:939.00px;top:652.50px;font-size:13.6px;line-height:18px;color:#595959;">-4</span>
<div style="left:404.4px;top:701.5px;width:545.6px;height:1px;background:#d9d9d9;"></div>
<span class="t" style="right:939.00px;top:692.50px;font-size:13.6px;line-height:18px;color:#595959;">-6</span>
<div style="left:404.4px;top:741.5px;width:545.6px;height:1px;background:#d9d9d9;"></div>
<span class="t" style="right:939.00px;top:732.50px;font-size:13.6px;line-height:18px;color:#595959;">-8</span>
<div style="left:413px;top:500.0px;width:8px;height:82.0px;background:#4472c4;"></div>
<span class="t" style="left:317.39px;width:200px;text-align:center;top:593.10px;font-size:13.4px;line-height:17px;color:#595959;">1</span>
<div style="left:438px;top:562px;width:8px;height:20px;background:#4472c4;"></div>
<span class="t" style="left:342.16px;width:200px;text-align:center;top:593.10px;font-size:13.4px;line-height:17px;color:#595959;">2</span>
<div style="left:463px;top:548.0px;width:8px;height:34.0px;background:#4472c4;"></div>
<span class="t" style="left:366.93px;width:200px;text-align:center;top:593.10px;font-size:13.4px;line-height:17px;color:#595959;">3</span>
<div style="left:487px;top:524.0px;width:8px;height:58.0px;background:#4472c4;"></div>
<span class="t" style="left:391.70px;width:200px;text-align:center;top:593.10px;font-size:13.4px;line-height:17px;color:#595959;">4</span>
<div style="left:512px;top:506.0px;width:8px;height:76.0px;background:#4472c4;"></div>
<span class="t" style="left:416.48px;width:200px;text-align:center;top:593.10px;font-size:13.4px;line-height:17px;color:#595959;">5</span>
<span class="t" style="left:441.25px;width:200px;text-align:center;top:593.10px;font-size:13.4px;line-height:17px;color:#595959;">6</span>
<span class="t" style="left:466.02px;width:200px;text-align:center;top:593.10px;font-size:13.4px;line-height:17px;color:#595959;">7</span>
<span class="t" style="left:490.80px;width:200px;text-align:center;top:593.10px;font-size:13.4px;line-height:17px;color:#595959;">8</span>
<span class="t" style="left:515.57px;width:200px;text-align:center;top:593.10px;font-size:13.4px;line-height:17px;color:#595959;">9</span>
<span class="t" style="left:540.34px;width:200px;text-align:center;top:593.10px;font-size:13.4px;line-height:17px;color:#595959;">10</span>
<span class="t" style="left:565.11px;width:200px;text-align:center;top:593.10px;font-size:13.4px;line-height:17px;color:#595959;">11</span>
<span class="t" style="left:589.89px;width:200px;text-align:center;top:593.10px;font-size:13.4px;line-height:17px;color:#595959;">12</span>
<span class="t" style="left:614.66px;width:200px;text-align:center;top:593.10px;font-size:13.4px;line-height:17px;color:#595959;">13</span>
<span class="t" style="left:639.43px;width:200px;text-align:center;top:593.10px;font-size:13.4px;line-height:17px;color:#595959;">14</span>
<span class="t" style="left:664.20px;width:200px;text-align:center;top:593.10px;font-size:13.4px;line-height:17px;color:#595959;">15</span>
<span class="t" style="left:688.98px;width:200px;text-align:center;top:593.10px;font-size:13.4px;line-height:17px;color:#595959;">16</span>
<span class="t" style="left:713.75px;width:200px;text-align:center;top:593.10px;font-size:13.4px;line-height:17px;color:#595959;">17</span>
<div style="left:834px;top:534.0px;width:8px;height:48.0px;background:#4472c4;"></div>
<span class="t" style="left:738.52px;width:200px;text-align:center;top:593.10px;font-size:13.4px;line-height:17px;color:#595959;">18</span>
<div style="left:859px;top:524.0px;width:8px;height:58.0px;background:#4472c4;"></div>
<span class="t" style="left:763.30px;width:200px;text-align:center;top:593.10px;font-size:13.4px;line-height:17px;color:#595959;">19</span>
<div style="left:884px;top:536.0px;width:8px;height:46.0px;background:#4472c4;"></div>
<span class="t" style="left:788.07px;width:200px;text-align:center;top:593.10px;font-size:13.4px;line-height:17px;color:#595959;">20</span>
<div style="left:908px;top:582px;width:8px;height:118.0px;background:#4472c4;"></div>
<span class="t" style="left:812.84px;width:200px;text-align:center;top:593.10px;font-size:13.4px;line-height:17px;color:#595959;">21</span>
<div style="left:933px;top:488.0px;width:8px;height:94.0px;background:#4472c4;"></div>
<span class="t" style="left:837.61px;width:200px;text-align:center;top:593.10px;font-size:13.4px;line-height:17px;color:#595959;">22</span>
<svg style="left:360.5px;top:392.5px;" width="18" height="18" viewBox="0 0 18 18"><circle cx="9" cy="9" r="6.2" fill="#fff" stroke="#8e8e8e" stroke-width="2.2"/></svg>
<svg style="left:660.5px;top:392.5px;" width="18" height="18" viewBox="0 0 18 18"><circle cx="9" cy="9" r="6.2" fill="#fff" stroke="#8e8e8e" stroke-width="2.2"/></svg>
<svg style="left:960.5px;top:392.5px;" width="18" height="18" viewBox="0 0 18 18"><circle cx="9" cy="9" r="6.2" fill="#fff" stroke="#8e8e8e" stroke-width="2.2"/></svg>
<svg style="left:360.5px;top:572.5px;" width="18" height="18" viewBox="0 0 18 18"><circle cx="9" cy="9" r="6.2" fill="#fff" stroke="#8e8e8e" stroke-width="2.2"/></svg>
<svg style="left:960.5px;top:572.5px;" width="18" height="18" viewBox="0 0 18 18"><circle cx="9" cy="9" r="6.2" fill="#fff" stroke="#8e8e8e" stroke-width="2.2"/></svg>
<svg style="left:360.5px;top:752.5px;" width="18" height="18" viewBox="0 0 18 18"><circle cx="9" cy="9" r="6.2" fill="#fff" stroke="#8e8e8e" stroke-width="2.2"/></svg>
<svg style="left:660.5px;top:752.5px;" width="18" height="18" viewBox="0 0 18 18"><circle cx="9" cy="9" r="6.2" fill="#fff" stroke="#8e8e8e" stroke-width="2.2"/></svg>
<svg style="left:960.5px;top:752.5px;" width="18" height="18" viewBox="0 0 18 18"><circle cx="9" cy="9" r="6.2" fill="#fff" stroke="#8e8e8e" stroke-width="2.2"/></svg>
<div style="left:1304px;top:256px;width:25px;height:656px;background:#e6e6e6;"></div>
<div style="left:1307px;top:258px;width:19px;height:19px;background:#fff;border:1px solid #b4b4b4;box-sizing:border-box;"></div>
<svg style="left:1307px;top:258px;" width="19" height="19" viewBox="0 0 19 19"><path d="M5 11.3 H14 L9.5 5.8 Z" fill="#777"/></svg>
<div style="left:1307px;top:277px;width:19px;height:564px;background:#fff;border:1px solid #b4b4b4;box-sizing:border-box;"></div>
<div style="left:1307px;top:841px;width:19px;height:24px;background:#d9d9d9;"></div>
<div style="left:1307px;top:865px;width:19px;height:19px;background:#fff;border:1px solid #b4b4b4;box-sizing:border-box;"></div>
<svg style="left:1307px;top:865px;" width="19" height="19" viewBox="0 0 19 19"><path d="M5 8 H14 L9.5 13.2 Z" fill="#777"/></svg>
<div style="left:1px;top:883px;width:1303px;height:29px;background:#e6e6e6;"></div>
<div style="left:1px;top:883px;width:1304px;height:1px;background:#a3a3a3;"></div>
<svg style="left:27px;top:891px;" width="10" height="13" viewBox="0 0 10 13"><path d="M7.3 1.7 V10.7 L2 6.2 Z" fill="#c6c6c6"/></svg>
<svg style="left:55px;top:891px;" width="10" height="13" viewBox="0 0 10 13"><path d="M2.7 1.7 V10.7 L8 6.2 Z" fill="#c6c6c6"/></svg>
<div style="left:104px;top:883px;width:58px;height:26px;background:#fff;border-left:1px solid #9a9a9a;border-right:1px solid #9a9a9a;border-bottom:2px solid #217346;box-sizing:border-box;"></div>
<span class="t" style="left:116.80px;top:883.70px;font-size:16px;line-height:21px;color:#217346;font-weight:700;letter-spacing:-0.328px;">USA</span>
<svg style="left:194px;top:887px;" width="22" height="22" viewBox="0 0 22 22"><circle cx="11" cy="10.8" r="9.3" fill="none" stroke="#767676" stroke-width="1.3"/><path d="M11 5.8 V15.8 M6 10.8 H16" stroke="#767676" stroke-width="1.4"/></svg>
<div style="left:795px;top:890px;width:2px;height:2px;background:#a6a6a6;"></div>
<div style="left:795px;top:895px;width:2px;height:2px;background:#a6a6a6;"></div>
<div style="left:795px;top:900px;width:2px;height:2px;background:#a6a6a6;"></div>
<div style="left:813px;top:888px;width:19px;height:19px;background:#fff;border:1px solid #b4b4b4;box-sizing:border-box;"></div>
<svg style="left:813px;top:888px;" width="19" height="19" viewBox="0 0 19 19"><path d="M11.8 5 V14 L6.5 9.5 Z" fill="#666"/></svg>
<div style="left:831px;top:888px;width:419px;height:19px;background:#fff;border:1px solid #b4b4b4;box-sizing:border-box;"></div>
<div style="left:1250px;top:888px;width:35px;height:19px;background:#d9d9d9;"></div>
<div style="left:1285px;top:888px;width:19px;height:19px;background:#fff;border:1px solid #b4b4b4;box-sizing:border-box;"></div>
<svg style="left:1285px;top:888px;" width="19" height="19" viewBox="0 0 19 19"><path d="M7.6 5 V14 L13 9.5 Z" fill="#666"/></svg>
<div style="left:1px;top:912px;width:1328px;height:27px;background:#f3f2f1;"></div>
<div style="left:1px;top:912px;width:1328px;height:1px;background:#d0cfce;"></div>
<span class="t" style="left:11.30px;top:917.70px;font-size:13.3px;line-height:17px;color:#444;letter-spacing:-0.589px;">Ready</span>
<span class="t" style="left:66.60px;top:917.70px;font-size:13.3px;line-height:17px;color:#444;letter-spacing:-0.517px;">Calculate</span>
<span class="t" style="left:637.30px;top:917.70px;font-size:13.3px;line-height:17px;color:#444;letter-spacing:-0.348px;">Average: 1,854545455</span>
<span class="t" style="left:785.50px;top:917.70px;font-size:13.3px;line-height:17px;color:#444;letter-spacing:-0.375px;">Count: 23</span>
<span class="t" style="left:860.00px;top:917.70px;font-size:13.3px;line-height:17px;color:#444;letter-spacing:-0.558px;">Sum: 40,8</span>
<div style="left:939px;top:913px;width:50px;height:26px;background:#c8c6c4;"></div>
<svg style="left:954px;top:916px;" width="20" height="20" viewBox="0 0 20 20"><rect x="2" y="2" width="15.4" height="15.4" fill="none" stroke="#333" stroke-width="1.5"/><path d="M2 7.2 H17.4 M2 12.3 H17.4 M7.2 2 V17.4 M12.3 2 V17.4" stroke="#333" stroke-width="1.4"/></svg>
<svg style="left:1004px;top:916px;" width="20" height="20" viewBox="0 0 20 20"><rect x="2" y="2.2" width="16" height="15" fill="none" stroke="#484644" stroke-width="1.6"/><rect x="5.6" y="5.6" width="8.8" height="8.4" fill="none" stroke="#484644" stroke-width="1.3"/><path d="M7.4 8.4 H12.6 M7.4 11.2 H12.6" stroke="#484644" stroke-width="1.1"/></svg>
<svg style="left:1054px;top:916px;" width="22" height="20" viewBox="0 0 22 20"><rect x="2.4" y="2" width="16" height="15.2" fill="none" stroke="#484644" stroke-width="1.6"/><path d="M6.6 2 V10.8 M12 2 V10.8 H2.4" fill="none" stroke="#484644" stroke-width="1.4"/></svg>
<div style="left:1095px;top:924.8px;width:10px;height:1.3px;background:#444;"></div>
<div style="left:1111.5px;top:926px;width:125px;height:1px;background:#8a8886;"></div>
<div style="left:1171.5px;top:918px;width:5.6px;height:16px;background:#6e6e6e;"></div>
<div style="left:1243px;top:924.9px;width:10px;height:1.3px;background:#444;"></div>
<div style="left:1247.3px;top:920.6px;width:1.3px;height:10px;background:#444;"></div>
<span class="t" style="left:1269.60px;top:917.70px;font-size:13.3px;line-height:17px;color:#444;letter-spacing:-0.622px;">100 %</span>
<div style="left:533px;top:114px;width:284px;height:520px;background:#fff;border:1px solid #c6c6c6;box-sizing:border-box;box-shadow:0 1px 5px rgba(0,0,0,0.22);"></div>
<div style="left:535px;top:234px;width:280px;height:1px;background:#e1e1e1;"></div>
<div style="left:535px;top:354px;width:280px;height:1px;background:#e1e1e1;"></div>
<div style="left:535px;top:474px;width:280px;height:1px;background:#e1e1e1;"></div>
<div style="left:535px;top:594px;width:280px;height:1px;background:#e1e1e1;"></div>
<span class="t" style="left:552.30px;top:125.10px;font-size:15.2px;line-height:20px;color:#1a1a1a;font-weight:700;letter-spacing:-0.199px;">2-D Column</span>
<span class="t" style="left:552.30px;top:245.00px;font-size:15.2px;line-height:20px;color:#1a1a1a;font-weight:700;letter-spacing:-0.179px;">3-D Column</span>
<span class="t" style="left:552.30px;top:365.10px;font-size:15.2px;line-height:20px;color:#1a1a1a;font-weight:700;letter-spacing:-0.109px;">2-D Bar</span>
<span class="t" style="left:552.30px;top:485.10px;font-size:15.2px;line-height:20px;color:#1a1a1a;font-weight:700;letter-spacing:-0.109px;">3-D Bar</span>
<div style="left:535px;top:153px;width:70px;height:70px;background:#c6c6c6;"></div>
<svg style="left:540px;top:160px;" width="200" height="56" viewBox="540 160 200 56"><rect x="555.6" y="169.3" width="6.6" height="39.0" fill="#83b9eb" stroke="#1674c4" stroke-width="1.4"/><rect x="562.8" y="182.6" width="5.6" height="25.6" fill="#fafafa" stroke="#444240" stroke-width="1.3"/><rect x="573.6" y="188.6" width="5.6" height="19.6" fill="#c8c6c4" stroke="#797775" stroke-width="1.3"/><rect x="579.8" y="178.0" width="6.2" height="30.2" fill="#fafafa" stroke="#444240" stroke-width="1.3"/><path d="M549.8 167 V208.2 H591.3" fill="none" stroke="#444240" stroke-width="1.4" stroke-linejoin="round"/><rect x="625.8" y="195.2" width="10.6" height="13.0" fill="#fafafa" stroke="#444240" stroke-width="1.3"/><rect x="625.8" y="181.2" width="10.6" height="14.0" fill="#83b9eb" stroke="#1674c4" stroke-width="1.5"/><rect x="644.0" y="190.2" width="10.4" height="18.0" fill="#fafafa" stroke="#444240" stroke-width="1.3"/><rect x="644.0" y="172.0" width="10.4" height="18.2" fill="#c8c6c4" stroke="#797775" stroke-width="1.3"/><path d="M619.8 167 V208.2 H661.3" fill="none" stroke="#444240" stroke-width="1.4" stroke-linejoin="round"/><rect x="695.8" y="199.4" width="10.6" height="8.8" fill="#fafafa" stroke="#444240" stroke-width="1.3"/><rect x="695.8" y="172.0" width="10.6" height="27.4" fill="#83b9eb" stroke="#1674c4" stroke-width="1.5"/><rect x="714.0" y="185.8" width="10.4" height="22.4" fill="#fafafa" stroke="#444240" stroke-width="1.3"/><rect x="714.0" y="172.0" width="10.4" height="13.8" fill="#c8c6c4" stroke="#797775" stroke-width="1.3"/><path d="M689.8 167 V208.2 H731.3" fill="none" stroke="#444240" stroke-width="1.4" stroke-linejoin="round"/></svg>
<svg style="left:540px;top:280px;" width="270" height="56" viewBox="540 280 270 56"><path d="M552.6 286 V320 L548 325.6 M552.6 320 H592" fill="none" stroke="#444240" stroke-width="1.1" stroke-linejoin="round"/><path d="M555.8 306.2 l3.2 -2.8 h6.4 l-3.2 2.8 Z" fill="#fafafa" stroke="#444240" stroke-width="1.1" stroke-linejoin="round"/><path d="M562.1999999999999 306.2 l3.2 -2.8 V326.8 l-3.2 2.8 Z" fill="#fafafa" stroke="#444240" stroke-width="1.1" stroke-linejoin="round"/><rect x="555.8" y="306.2" width="6.4" height="23.4" fill="#fafafa" stroke="#444240" stroke-width="1.2"/><path d="M574.8 300.4 l3.2 -2.8 h6.6 l-3.2 2.8 Z" fill="#fafafa" stroke="#444240" stroke-width="1.1" stroke-linejoin="round"/><path d="M581.4 300.4 l3.2 -2.8 V326.8 l-3.2 2.8 Z" fill="#fafafa" stroke="#444240" stroke-width="1.1" stroke-linejoin="round"/><rect x="574.8" y="300.4" width="6.6" height="29.2" fill="#fafafa" stroke="#444240" stroke-width="1.2"/><path d="M581.6 305 l3.2 -2.8 h6.4 l-3.2 2.8 Z" fill="#c8c6c4" stroke="#797775" stroke-width="1.1" stroke-linejoin="round"/><path d="M588.0 305 l3.2 -2.8 V326.8 l-3.2 2.8 Z" fill="#c8c6c4" stroke="#797775" stroke-width="1.1" stroke-linejoin="round"/><rect x="581.6" y="305.0" width="6.4" height="24.6" fill="#c8c6c4" stroke="#797775" stroke-width="1.2"/><path d="M562.4 296 l3.2 -2.8 h6.4 l-3.2 2.8 Z" fill="#83b9eb" stroke="#1674c4" stroke-width="1.1" stroke-linejoin="round"/><path d="M568.8 296 l3.2 -2.8 V326.8 l-3.2 2.8 Z" fill="#83b9eb" stroke="#1674c4" stroke-width="1.1" stroke-linejoin="round"/><rect x="562.4" y="296.0" width="6.4" height="33.6" fill="#83b9eb" stroke="#1674c4" stroke-width="1.2"/><path d="M624.3 286 V317.8 L618.4 323.6 M624.3 317.8 H662" fill="none" stroke="#444240" stroke-width="1.1" stroke-linejoin="round"/><path d="M629.4 318.4 l3.2 -2.8 h9 l-3.2 2.8 Z" fill="#fafafa" stroke="#444240" stroke-width="1.1" stroke-linejoin="round"/><path d="M638.4 318.4 l3.2 -2.8 V326.4 l-3.2 2.8 Z" fill="#fafafa" stroke="#444240" stroke-width="1.1" stroke-linejoin="round"/><rect x="629.4" y="318.4" width="9.0" height="10.8" fill="#fafafa" stroke="#444240" stroke-width="1.2"/><path d="M629.4 303.2 l3.2 -2.8 h9 l-3.2 2.8 Z" fill="#83b9eb" stroke="#1674c4" stroke-width="1.1" stroke-linejoin="round"/><path d="M638.4 303.2 l3.2 -2.8 V315.59999999999997 l-3.2 2.8 Z" fill="#83b9eb" stroke="#1674c4" stroke-width="1.1" stroke-linejoin="round"/><rect x="629.4" y="303.2" width="9.0" height="15.2" fill="#83b9eb" stroke="#1674c4" stroke-width="1.2"/><path d="M645.8 310 l3.2 -2.8 h9 l-3.2 2.8 Z" fill="#fafafa" stroke="#444240" stroke-width="1.1" stroke-linejoin="round"/><path d="M654.8 310 l3.2 -2.8 V326.4 l-3.2 2.8 Z" fill="#fafafa" stroke="#444240" stroke-width="1.1" stroke-linejoin="round"/><rect x="645.8" y="310.0" width="9.0" height="19.2" fill="#fafafa" stroke="#444240" stroke-width="1.2"/><path d="M645.8 294.4 l3.2 -2.8 h9 l-3.2 2.8 Z" fill="#83b9eb" stroke="#1674c4" stroke-width="1.1" stroke-linejoin="round"/><path d="M654.8 294.4 l3.2 -2.8 V307.2 l-3.2 2.8 Z" fill="#83b9eb" stroke="#1674c4" stroke-width="1.1" stroke-linejoin="round"/><rect x="645.8" y="294.4" width="9.0" height="15.6" fill="#83b9eb" stroke="#1674c4" stroke-width="1.2"/><path d="M694.3 286 V317.8 L688.4 323.6 M694.3 317.8 H732" fill="none" stroke="#444240" stroke-width="1.1" stroke-linejoin="round"/><path d="M699.8 318.4 l3.2 -2.8 h9 l-3.2 2.8 Z" fill="#fafafa" stroke="#444240" stroke-width="1.1" stroke-linejoin="round"/><path d="M708.8 318.4 l3.2 -2.8 V326.4 l-3.2 2.8 Z" fill="#fafafa" stroke="#444240" stroke-width="1.1" stroke-linejoin="round"/><rect x="699.8" y="318.4" width="9.0" height="10.8" fill="#fafafa" stroke="#444240" stroke-width="1.2"/><path d="M699.8 294.4 l3.2 -2.8 h9 l-3.2 2.8 Z" fill="#83b9eb" stroke="#1674c4" stroke-width="1.1" stroke-linejoin="round"/><path d="M708.8 294.4 l3.2 -2.8 V315.59999999999997 l-3.2 2.8 Z" fill="#83b9eb" stroke="#1674c4" stroke-width="1.1" stroke-linejoin="round"/><rect x="699.8" y="294.4" width="9.0" height="24.0" fill="#83b9eb" stroke="#1674c4" stroke-width="1.2"/><path d="M716 303.2 l3.2 -2.8 h9 l-3.2 2.8 Z" fill="#fafafa" stroke="#444240" stroke-width="1.1" stroke-linejoin="round"/><path d="M725 303.2 l3.2 -2.8 V326.4 l-3.2 2.8 Z" fill="#fafafa" stroke="#444240" stroke-width="1.1" stroke-linejoin="round"/><rect x="716.0" y="303.2" width="9.0" height="26.0" fill="#fafafa" stroke="#444240" stroke-width="1.2"/><path d="M716 294.4 l3.2 -2.8 h9 l-3.2 2.8 Z" fill="#83b9eb" stroke="#1674c4" stroke-width="1.1" stroke-linejoin="round"/><path d="M725 294.4 l3.2 -2.8 V300.4 l-3.2 2.8 Z" fill="#83b9eb" stroke="#1674c4" stroke-width="1.1" stroke-linejoin="round"/><rect x="716.0" y="294.4" width="9.0" height="8.8" fill="#83b9eb" stroke="#1674c4" stroke-width="1.2"/><path d="M762.8 286 V321 L758.4 326.4 M762.8 321 H802" fill="none" stroke="#444240" stroke-width="1.1" stroke-linejoin="round"/><path d="M771.4 295.4 l2.6 -2.6 h5.4 l-2.6 2.6 Z" fill="#83b9eb" stroke="#1674c4" stroke-width="1.1" stroke-linejoin="round"/><path d="M776.8 295.4 l2.6 -2.6 V324.0 l-2.6 2.6 Z" fill="#83b9eb" stroke="#1674c4" stroke-width="1.1" stroke-linejoin="round"/><rect x="771.4" y="295.4" width="5.4" height="31.2" fill="#83b9eb" stroke="#1674c4" stroke-width="1.2"/><path d="M789.8 294.2 l2.6 -2.6 h5.4 l-2.6 2.6 Z" fill="#83b9eb" stroke="#1674c4" stroke-width="1.1" stroke-linejoin="round"/><path d="M795.1999999999999 294.2 l2.6 -2.6 V322.79999999999995 l-2.6 2.6 Z" fill="#83b9eb" stroke="#1674c4" stroke-width="1.1" stroke-linejoin="round"/><rect x="789.8" y="294.2" width="5.4" height="31.2" fill="#83b9eb" stroke="#1674c4" stroke-width="1.2"/><path d="M765.2 308.6 l2.6 -2.6 h5.6 l-2.6 2.6 Z" fill="#fafafa" stroke="#444240" stroke-width="1.1" stroke-linejoin="round"/><path d="M770.8000000000001 308.6 l2.6 -2.6 V327.0 l-2.6 2.6 Z" fill="#fafafa" stroke="#444240" stroke-width="1.1" stroke-linejoin="round"/><rect x="765.2" y="308.6" width="5.6" height="21.0" fill="#fafafa" stroke="#444240" stroke-width="1.2"/><path d="M783.4 301.6 l2.6 -2.6 h5.8 l-2.6 2.6 Z" fill="#fafafa" stroke="#444240" stroke-width="1.1" stroke-linejoin="round"/><path d="M789.1999999999999 301.6 l2.6 -2.6 V327.0 l-2.6 2.6 Z" fill="#fafafa" stroke="#444240" stroke-width="1.1" stroke-linejoin="round"/><rect x="783.4" y="301.6" width="5.8" height="28.0" fill="#fafafa" stroke="#444240" stroke-width="1.2"/></svg>
<svg style="left:540px;top:400px;" width="200" height="56" viewBox="540 400 200 56"><rect x="550.0" y="418.4" width="25.0" height="5.8" fill="#fafafa" stroke="#444240" stroke-width="1.3"/><rect x="550.0" y="412.4" width="38.6" height="6.0" fill="#83b9eb" stroke="#1674c4" stroke-width="1.4"/><rect x="550.0" y="436.2" width="29.8" height="5.8" fill="#fafafa" stroke="#444240" stroke-width="1.3"/><rect x="550.0" y="430.4" width="19.0" height="5.8" fill="#c8c6c4" stroke="#797775" stroke-width="1.3"/><path d="M549.9 407 V448 H590.9" fill="none" stroke="#444240" stroke-width="1.4" stroke-linejoin="round"/><rect x="620.0" y="413.8" width="12.8" height="10.4" fill="#fafafa" stroke="#444240" stroke-width="1.3"/><rect x="632.8" y="413.8" width="14.0" height="10.4" fill="#83b9eb" stroke="#1674c4" stroke-width="1.5"/><rect x="620.0" y="431.8" width="18.8" height="10.4" fill="#fafafa" stroke="#444240" stroke-width="1.3"/><rect x="638.8" y="431.8" width="17.2" height="10.4" fill="#c8c6c4" stroke="#797775" stroke-width="1.3"/><path d="M619.8 407 V448 H660.8" fill="none" stroke="#444240" stroke-width="1.4" stroke-linejoin="round"/><rect x="690.0" y="413.8" width="8.4" height="10.4" fill="#fafafa" stroke="#444240" stroke-width="1.3"/><rect x="698.4" y="413.8" width="27.6" height="10.4" fill="#83b9eb" stroke="#1674c4" stroke-width="1.5"/><rect x="690.0" y="431.8" width="21.6" height="10.4" fill="#fafafa" stroke="#444240" stroke-width="1.3"/><rect x="711.6" y="431.8" width="14.4" height="10.4" fill="#c8c6c4" stroke="#797775" stroke-width="1.3"/><path d="M689.8 407 V448 H730.8" fill="none" stroke="#444240" stroke-width="1.4" stroke-linejoin="round"/></svg>
<svg style="left:540px;top:520px;" width="200" height="56" viewBox="540 520 200 56"><path d="M556.5 526 V565.2 L550.4 569.4 M556.5 565.2 H592" fill="none" stroke="#444240" stroke-width="1.1" stroke-linejoin="round"/><path d="M548.4 534.4 l3.2 1.7 H573.8000000000001 l-3.2 -1.7 Z" fill="#fafafa" stroke="#444240" stroke-width="1.1" stroke-linejoin="round"/><path d="M570.6 527.2 l3.2 1.7 V536.1 l-3.2 -1.7 Z" fill="#fafafa" stroke="#444240" stroke-width="1.1" stroke-linejoin="round"/><rect x="548.4" y="527.2" width="22.2" height="7.2" fill="#fafafa" stroke="#444240" stroke-width="1.2"/><path d="M548.4 541.8 l3.2 1.7 H583.6 l-3.2 -1.7 Z" fill="#83b9eb" stroke="#1674c4" stroke-width="1.1" stroke-linejoin="round"/><path d="M580.4 534.4 l3.2 1.7 V543.5 l-3.2 -1.7 Z" fill="#83b9eb" stroke="#1674c4" stroke-width="1.1" stroke-linejoin="round"/><rect x="548.4" y="534.4" width="32.0" height="7.4" fill="#83b9eb" stroke="#1674c4" stroke-width="1.2"/><path d="M548.4 554 l3.2 1.7 H579.8000000000001 l-3.2 -1.7 Z" fill="#fafafa" stroke="#444240" stroke-width="1.1" stroke-linejoin="round"/><path d="M576.6 547 l3.2 1.7 V555.7 l-3.2 -1.7 Z" fill="#fafafa" stroke="#444240" stroke-width="1.1" stroke-linejoin="round"/><rect x="548.4" y="547.0" width="28.2" height="7.0" fill="#fafafa" stroke="#444240" stroke-width="1.2"/><path d="M548.4 561.2 l3.2 1.7 H574.8000000000001 l-3.2 -1.7 Z" fill="#83b9eb" stroke="#1674c4" stroke-width="1.1" stroke-linejoin="round"/><path d="M571.6 554 l3.2 1.7 V562.9000000000001 l-3.2 -1.7 Z" fill="#83b9eb" stroke="#1674c4" stroke-width="1.1" stroke-linejoin="round"/><rect x="548.4" y="554.0" width="23.2" height="7.2" fill="#83b9eb" stroke="#1674c4" stroke-width="1.2"/><path d="M626.5 526 V563.6 L620.4 569.4 M626.5 563.6 H662" fill="none" stroke="#444240" stroke-width="1.1" stroke-linejoin="round"/><path d="M618.4 535 l3.2 -3.4 H632.6 l-3.2 3.4 Z" fill="#fafafa" stroke="#444240" stroke-width="1.1" stroke-linejoin="round"/><path d="M629.4 535 l3.2 -3.4 V539.8000000000001 l-3.2 3.4 Z" fill="#fafafa" stroke="#444240" stroke-width="1.1" stroke-linejoin="round"/><rect x="618.4" y="535.0" width="11.0" height="8.2" fill="#fafafa" stroke="#444240" stroke-width="1.2"/><path d="M629.4 535 l3.2 -3.4 H647.8000000000001 l-3.2 3.4 Z" fill="#83b9eb" stroke="#1674c4" stroke-width="1.1" stroke-linejoin="round"/><path d="M644.6 535 l3.2 -3.4 V539.8000000000001 l-3.2 3.4 Z" fill="#83b9eb" stroke="#1674c4" stroke-width="1.1" stroke-linejoin="round"/><rect x="629.4" y="535.0" width="15.2" height="8.2" fill="#83b9eb" stroke="#1674c4" stroke-width="1.2"/><path d="M618.4 551 l3.2 -3.4 H640.4000000000001 l-3.2 3.4 Z" fill="#fafafa" stroke="#444240" stroke-width="1.1" stroke-linejoin="round"/><path d="M637.2 551 l3.2 -3.4 V556.0 l-3.2 3.4 Z" fill="#fafafa" stroke="#444240" stroke-width="1.1" stroke-linejoin="round"/><rect x="618.4" y="551.0" width="18.8" height="8.4" fill="#fafafa" stroke="#444240" stroke-width="1.2"/><path d="M637.2 551 l3.2 -3.4 H656.8000000000001 l-3.2 3.4 Z" fill="#83b9eb" stroke="#1674c4" stroke-width="1.1" stroke-linejoin="round"/><path d="M653.6 551 l3.2 -3.4 V556.0 l-3.2 3.4 Z" fill="#83b9eb" stroke="#1674c4" stroke-width="1.1" stroke-linejoin="round"/><rect x="637.2" y="551.0" width="16.4" height="8.4" fill="#83b9eb" stroke="#1674c4" stroke-width="1.2"/><path d="M696.5 526 V563.6 L690.4 569.4 M696.5 563.6 H732" fill="none" stroke="#444240" stroke-width="1.1" stroke-linejoin="round"/><path d="M688.4 535 l3.2 -3.4 H701.6 l-3.2 3.4 Z" fill="#fafafa" stroke="#444240" stroke-width="1.1" stroke-linejoin="round"/><path d="M698.4 535 l3.2 -3.4 V539.8000000000001 l-3.2 3.4 Z" fill="#fafafa" stroke="#444240" stroke-width="1.1" stroke-linejoin="round"/><rect x="688.4" y="535.0" width="10.0" height="8.2" fill="#fafafa" stroke="#444240" stroke-width="1.2"/><path d="M698.4 535 l3.2 -3.4 H726.2 l-3.2 3.4 Z" fill="#83b9eb" stroke="#1674c4" stroke-width="1.1" stroke-linejoin="round"/><path d="M723 535 l3.2 -3.4 V539.8000000000001 l-3.2 3.4 Z" fill="#83b9eb" stroke="#1674c4" stroke-width="1.1" stroke-linejoin="round"/><rect x="698.4" y="535.0" width="24.6" height="8.2" fill="#83b9eb" stroke="#1674c4" stroke-width="1.2"/><path d="M688.4 551 l3.2 -3.4 H709.6 l-3.2 3.4 Z" fill="#fafafa" stroke="#444240" stroke-width="1.1" stroke-linejoin="round"/><path d="M706.4 551 l3.2 -3.4 V556.0 l-3.2 3.4 Z" fill="#fafafa" stroke="#444240" stroke-width="1.1" stroke-linejoin="round"/><rect x="688.4" y="551.0" width="18.0" height="8.4" fill="#fafafa" stroke="#444240" stroke-width="1.2"/><path d="M706.4 551 l3.2 -3.4 H726.2 l-3.2 3.4 Z" fill="#83b9eb" stroke="#1674c4" stroke-width="1.1" stroke-linejoin="round"/><path d="M723 551 l3.2 -3.4 V556.0 l-3.2 3.4 Z" fill="#83b9eb" stroke="#1674c4" stroke-width="1.1" stroke-linejoin="round"/><rect x="706.4" y="551.0" width="16.6" height="8.4" fill="#83b9eb" stroke="#1674c4" stroke-width="1.2"/></svg>
<svg style="left:545px;top:598px;" width="30" height="28" viewBox="545 598 30 28"><rect x="553.5" y="603.9" width="5.1" height="17.0" fill="#83b9eb" stroke="#1674c4" stroke-width="1.7"/><rect x="561.3" y="609.2" width="4.4" height="11.6" fill="#fafafa" stroke="#605e5c" stroke-width="1.6"/><path d="M549.7 602.3 V620.9 H569" fill="none" stroke="#444240" stroke-width="1.4" stroke-linejoin="round"/></svg>
<span class="t" style="left:580.60px;top:603.90px;font-size:15.2px;line-height:20px;color:#333;letter-spacing:-0.471px;"><u>M</u>ore Column Charts...</span>
</div></body></html>
